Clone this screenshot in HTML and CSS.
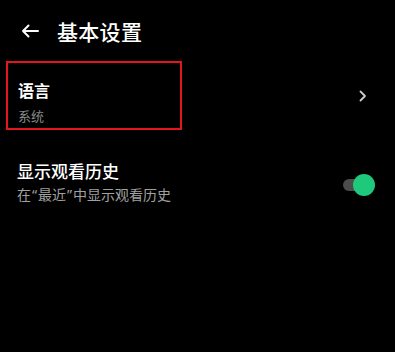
FILE: index.html
```html
<!DOCTYPE html>
<html lang="zh-CN">
<head>
  <meta charset="UTF-8" />
  <meta name="viewport" content="width=device-width, initial-scale=1.0" />
  <title>基本设置</title>
  <link rel="stylesheet" href="styles.css">
</head>
<body>
  <div class="page">
    <div class="header">
      <svg class="back" width="18" height="14" viewBox="0 0 18 14">
        <path d="M17 7H2M7.5 1.5L2 7l5.5 5.5" fill="none" stroke="#fff" stroke-width="2" stroke-linecap="round" stroke-linejoin="round"/>
      </svg>
      <h1>基本设置</h1>
    </div>

    <div class="row row-lang">
      <div class="highlight">
        <div class="title">语言</div>
        <div class="sub">系统</div>
      </div>
      <svg class="chev" width="8" height="12" viewBox="0 0 8 12">
        <path d="M1.5 1.5L6 6l-4.5 4.5" fill="none" stroke="#ccc" stroke-width="1.8" stroke-linecap="round" stroke-linejoin="round"/>
      </svg>
    </div>

    <div class="row row-history">
      <div class="text">
        <div class="title">显示观看历史</div>
        <div class="sub">在<span class="q">“</span>最近<span class="q">”</span>中显示观看历史</div>
      </div>
      <div class="switch"><span class="knob"></span></div>
    </div>
  </div>
</body>
</html>
```

FILE: styles.css
```css
html, body {
  margin: 0;
  padding: 0;
  background: #000;
}
body {
  font-family: "Noto Sans CJK SC", "Noto Sans", sans-serif;
  color: #fff;
  width: 395px;
  height: 352px;
  overflow: hidden;
}
.page {
  padding-top: 18px;
}
.header {
  display: flex;
  align-items: center;
  height: 26px;
  padding-left: 21px;
}
.back {
  display: block;
}
h1 {
  margin: 0 0 0 18px;
  font-size: 21px;
  font-weight: 500;
  line-height: 26px;
  letter-spacing: 0.3px;
}
.row {
  display: flex;
  align-items: center;
  justify-content: space-between;
}
.row-lang {
  margin-top: 17px;
  padding-left: 6px;
  padding-right: 28px;
}
.highlight {
  box-sizing: border-box;
  width: 176px;
  height: 69px;
  border: 2.5px solid #e5161b;
  padding: 16px 0 0 10px;
}
.title {
  font-size: 16px;
  font-weight: 700;
  line-height: 22px;
}
.sub {
  font-size: 13px;
  color: #8a8a8a;
  line-height: 18px;
  margin-top: 6px;
}
.chev {
  display: block;
}
.row-history {
  margin-top: 30px;
  padding-left: 17px;
  padding-right: 20px;
}
.row-history .title {
  font-weight: 500;
  font-size: 17px;
}
.row-history .sub {
  font-size: 14px;
  color: #a0a0a0;
  margin-top: 3px;
}
.q {
  font-family: "Noto Sans", sans-serif;
  margin: 0 1px;
}
.switch {
  position: relative;
  width: 32px;
  height: 22px;
  margin-top: 6px;
}
.switch::before {
  content: "";
  position: absolute;
  left: 0;
  top: 5px;
  width: 26px;
  height: 12px;
  border-radius: 6px;
  background: #4c4c4c;
}
.knob {
  position: absolute;
  right: 0;
  top: 0;
  width: 22px;
  height: 22px;
  border-radius: 50%;
  background: #1ec97b;
}
```
